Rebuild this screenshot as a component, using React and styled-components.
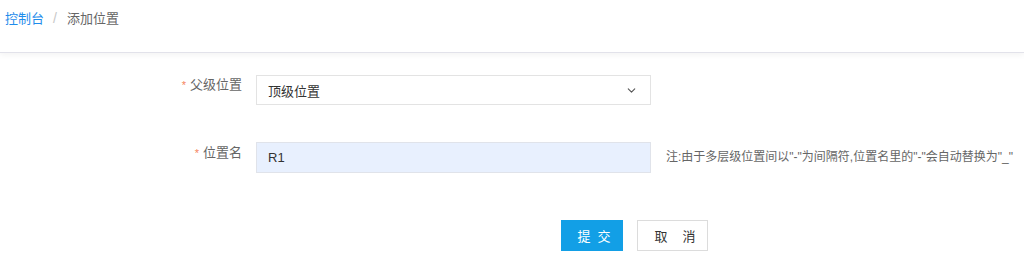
import React from 'react';
import styled, { createGlobalStyle } from 'styled-components';
import { ChevronDown } from 'lucide-react';

const GlobalStyle = createGlobalStyle`
  html, body {
    margin: 0;
    padding: 0;
    background: #fff;
  }
  body {
    font-family: "Liberation Sans", "Noto Sans CJK SC", sans-serif;
    color: #333;
  }
`;

const Page = styled.div`
  width: 1024px;
  height: 272px;
  overflow: hidden;
  background: #fff;
`;

const Header = styled.div`
  height: 53px;
  border-bottom: 1px solid #e2e2ea;
  box-shadow: 0 2px 6px rgba(0, 0, 0, 0.05);
  display: flex;
  align-items: baseline;
  padding: 8px 0 0 5px;
  box-sizing: border-box;
  font-size: 13px;
`;

const Crumb = styled.span`
  color: ${props => props.active ? '#1f8ceb' : '#666'};
`;

const Sep = styled.span`
  color: #c8c8c8;
  font-size: 14px;
  margin: 0 10px 0 9px;
`;

const Form = styled.div`
  display: grid;
  grid-template-columns: 242px 395px auto;
  column-gap: 14px;
  row-gap: 37px;
  padding-top: 22px;
  align-items: start;
`;

const Label = styled.label`
  text-align: right;
  font-size: 13px;
  color: #666;
  line-height: 17px;
  padding-top: ${props => props.top}px;
`;

const Star = styled.span`
  color: #f5845c;
  font-size: 11px;
  margin-right: 4px;
`;

const SelectBox = styled.div`
  height: 30px;
  box-sizing: border-box;
  border: 1px solid #e3e3e3;
  background: #fff;
  display: flex;
  align-items: center;
  justify-content: space-between;
  padding: 0 12px 0 11px;
  font-size: 13px;
  color: #333;
`;

const Input = styled.div`
  height: 31px;
  box-sizing: border-box;
  border: 1px solid #e0e3ea;
  background: #e8f0fe;
  display: flex;
  align-items: center;
  padding: 0 11px;
  font-size: 13px;
  color: #333;
`;

const Note = styled.div`
  font-size: 12px;
  color: #666;
  line-height: 31px;
  margin-left: 1px;
  white-space: nowrap;
`;

const Actions = styled.div`
  display: flex;
  gap: 14px;
  padding: 47px 0 0 561px;
`;

const Button = styled.button`
  height: 31px;
  width: ${props => props.w}px;
  box-sizing: border-box;
  display: inline-flex;
  align-items: center;
  justify-content: center;
  gap: ${props => props.spacing}px;
  font-family: inherit;
  font-size: 13px;
  padding: 0 0 0 ${props => props.inset}px;
  border: 1px solid ${props => props.primary ? '#129fe6' : '#dcdcdc'};
  background: ${props => props.primary ? '#129fe6' : '#fff'};
  color: ${props => props.primary ? '#fff' : '#333'};
  cursor: pointer;
`;

const SpacedButton = ({ text, ...rest }) => (
  <Button {...rest}>
    {[...text].map((ch, i) => <span key={i}>{ch}</span>)}
  </Button>
);

const App = () => (
  <Page>
    <GlobalStyle />
    <Header>
      <Crumb active>控制台</Crumb>
      <Sep>/</Sep>
      <Crumb>添加位置</Crumb>
    </Header>
    <Form>
      <Label top={1}><Star>*</Star>父级位置</Label>
      <SelectBox>
        <span>顶级位置</span>
        <ChevronDown size={13} color="#555" strokeWidth={2} />
      </SelectBox>
      <div />
      <Label top={2}><Star>*</Star>位置名</Label>
      <Input>R1</Input>
      <Note>注:由于多层级位置间以"-"为间隔符,位置名里的"-"会自动替换为"_"</Note>
    </Form>
    <Actions>
      <SpacedButton primary w={62} spacing={7} inset={4} text="提交" />
      <SpacedButton w={71} spacing={15} inset={5} text="取消" />
    </Actions>
  </Page>
);

export default App;
